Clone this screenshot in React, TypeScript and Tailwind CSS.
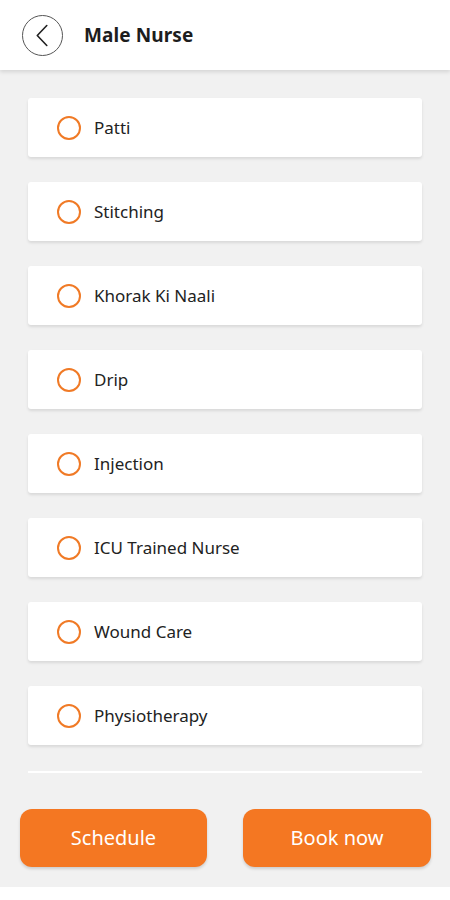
const services = [
  "Patti",
  "Stitching",
  "Khorak Ki Naali",
  "Drip",
  "Injection",
  "ICU Trained Nurse",
  "Wound Care",
  "Physiotherapy",
];

export default function App() {
  return (
    <div className="min-h-[900px] bg-white font-['Noto_Sans','Lato',sans-serif] text-[#1d1d1d]">
      <header className="relative z-10 flex h-[70px] items-center bg-white pl-[22px] shadow-[0_2px_4px_rgba(0,0,0,0.12)]">
        <button className="flex h-[41px] w-[41px] items-center justify-center rounded-full border border-[#555]">
          <svg width="41" height="41" viewBox="0 0 41 41" fill="none">
            <path d="M25 10 L15 20.5 L25 31" stroke="#222" strokeWidth="1.7" strokeLinecap="round" strokeLinejoin="round" />
          </svg>
        </button>
        <h1 className="ml-[21px] text-[19px] font-bold tracking-[0.1px]">Male Nurse</h1>
      </header>

      <main className="bg-[#f1f1f1] px-[20px] pb-[20px] pt-[28px]">
        <div className="flex flex-col gap-[25px] px-[8px]">
          {services.map((name) => (
            <label
              key={name}
              className="flex h-[59px] items-center rounded-[3px] bg-white pl-[29px] shadow-[0_2px_3px_rgba(0,0,0,0.1)]"
            >
              <span className="h-[24px] w-[24px] rounded-full border-[2px] border-[#f07a26]" />
              <span className="ml-[13px] text-[17px] text-[#222]">{name}</span>
            </label>
          ))}
        </div>

        <div className="mx-[8px] mt-[26px] h-[2px] bg-white" />

        <div className="mt-[36px] flex justify-between">
          <button className="h-[58px] w-[187px] rounded-[12px] bg-[#f47722] text-[20px] text-white shadow-[0_2px_3px_rgba(0,0,0,0.15)]">
            Schedule
          </button>
          <button className="-mr-[1px] h-[58px] w-[188px] rounded-[12px] bg-[#f47722] text-[20px] text-white shadow-[0_2px_3px_rgba(0,0,0,0.15)]">
            Book now
          </button>
        </div>
      </main>
    </div>
  );
}
